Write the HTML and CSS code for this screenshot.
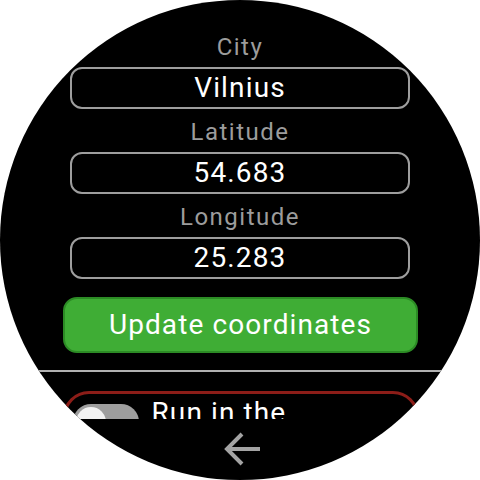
FILE: index.html
```html
<!DOCTYPE html>
<html>
<head>
<meta charset="utf-8">
<link rel="stylesheet" href="styles.css">
</head>
<body>
<div class="screen">
  <div class="scroll">
    <div class="form">
      <div class="label">City</div>
      <div class="field">Vilnius</div>
      <div class="label">Latitude</div>
      <div class="field">54.683</div>
      <div class="label">Longitude</div>
      <div class="field">25.283</div>
    </div>
    <div class="button">Update coordinates</div>
    <div class="divider"></div>
    <div class="card">
      <div class="toggle"><div class="thumb"></div></div>
      <div class="card-text">Run in the background</div>
    </div>
  </div>
  <div class="footer">
    <svg width="40" height="40" viewBox="0 0 40 40">
      <path d="M37 19H5M19 4L4 19L19 34" fill="none" stroke="#a3a3a3" stroke-width="4" stroke-linecap="butt" stroke-linejoin="miter"/>
    </svg>
  </div>
</div>
</body>
</html>
```
FILE: styles.css
```css
html, body {
  margin: 0;
  padding: 0;
  background: #ffffff;
}
.screen {
  width: 480px;
  height: 480px;
  border-radius: 50%;
  background: #000000;
  overflow: hidden;
  display: flex;
  flex-direction: column;
  font-family: Roboto, "Noto Sans", sans-serif;
  font-weight: 400;
}
.scroll {
  height: 419px;
  overflow: hidden;
  padding-top: 24px;
  box-sizing: border-box;
  display: flex;
  flex-direction: column;
  align-items: center;
  flex-shrink: 0;
}
.form {
  width: 340px;
  display: flex;
  flex-direction: column;
}
.label {
  margin-top: 3px;
  height: 40px;
  line-height: 40px;
  font-size: 24px;
  letter-spacing: 1.5px;
  color: #9c9c9c;
  text-align: center;
}
.field {
  height: 42px;
  box-sizing: border-box;
  border: 2px solid #9e9e9e;
  border-radius: 12px;
  line-height: 38px;
  font-size: 28px;
  letter-spacing: 1.15px;
  color: #ffffff;
  text-align: center;
}
.button {
  margin-top: 18px;
  width: 355px;
  height: 56px;
  box-sizing: border-box;
  background: #3fad35;
  border: 2px solid #2c8b25;
  border-radius: 14px;
  color: #ffffff;
  font-size: 28px;
  letter-spacing: 1.1px;
  line-height: 52px;
  text-align: center;
  margin-left: 1px;
}
.divider {
  margin-top: 17px;
  width: 480px;
  height: 2px;
  background: #b0b0b0;
  flex-shrink: 0;
}
.card {
  margin-top: 19px;
  width: 356px;
  height: 120px;
  box-sizing: border-box;
  border: 3px solid #8c1d18;
  border-radius: 26px;
  display: flex;
  align-items: flex-start;
  padding: 7px 0 0 7px;
  gap: 13px;
  flex-shrink: 0;
  margin-left: 1px;
}
.toggle {
  width: 66px;
  height: 36px;
  border-radius: 18px;
  background: #9e9e9e;
  margin-top: 3px;
  position: relative;
  flex-shrink: 0;
}
.thumb {
  position: absolute;
  left: 3px;
  top: 3px;
  width: 30px;
  height: 30px;
  border-radius: 50%;
  background: #f2f2f2;
}
.card-text {
  color: #ffffff;
  font-size: 28px;
  letter-spacing: 1.1px;
  line-height: 24px;
  width: 200px;
}
.footer {
  flex: 1;
  display: flex;
  justify-content: center;
  align-items: flex-start;
  padding-top: 11px;
  padding-left: 6px;
}
```
